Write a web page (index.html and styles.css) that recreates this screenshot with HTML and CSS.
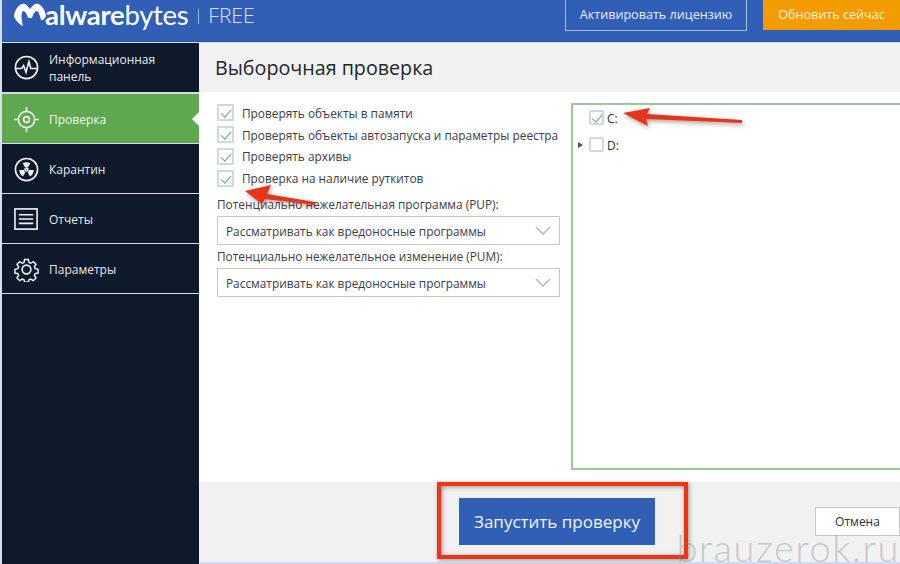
FILE: index.html
```html
<!DOCTYPE html>
<html lang="ru">
<head>
  <meta charset="utf-8">
  <title>Malwarebytes FREE</title>
  <link rel="stylesheet" href="styles.css">
</head>
<body>
<div class="app">
  <header class="topbar">
    <div class="logo">
      <svg class="logo-mark" viewBox="0 0 32 24" width="32" height="24">
        <path fill="#fff" d="M0 13C1 7 4 2 8 1c3-1 5 1 8 5 3-4 5-6 8-5 4 1 7 6 8 12-1 2-3 5-5 4-1-4-2-8-4-9-2 0-4 3-5 7h-4C13 11 11 8 9 8c-2 1-2 8 0 15C5 21 1 17 0 13z"/>
      </svg>
      <span class="logo-text"><b>alware</b>bytes</span>
      <span class="logo-sep"></span>
      <span class="logo-free">FREE</span>
    </div>
    <div class="top-actions">
      <a class="btn-activate">Активировать лицензию</a>
      <a class="btn-upgrade">Обновить сейчас</a>
    </div>
  </header>

  <div class="body-row">
    <nav class="sidebar">
      <div class="nav-item nav-tall">
        <svg class="nav-icon" viewBox="0 0 26 26"><circle cx="13" cy="13" r="11.5"/><path d="M2 14h6l2-3 2.500 7 3-11 2 7h6.500"/></svg>
        <span>Информационная панель</span>
      </div>
      <div class="nav-item nav-active">
        <svg class="nav-icon" viewBox="0 0 26 26"><circle cx="13" cy="13" r="8.500"/><circle cx="13" cy="13" r="3"/><path d="M13 0v4.500M13 21.500V26M0 13h4.500M21.500 13H26"/></svg>
        <span>Проверка</span>
      </div>
      <div class="nav-item">
        <svg class="nav-icon" viewBox="0 0 26 26"><circle cx="13" cy="13" r="11.500"/><circle cx="13" cy="13" r="1.500"/><path class="filled" d="M9 6.500c2.500-1.400 5.500-1.400 8 0l-2.500 4.200c-1-.5-2-.5-3 0zM5.500 13.500h5c0 1 .5 1.900 1.300 2.400l-2.500 4.300c-2.300-1.400-3.800-3.900-3.800-6.700zM20.500 13.500h-5c0 1-.5 1.900-1.300 2.400l2.500 4.300c2.300-1.400 3.800-3.900 3.800-6.700z"/></svg>
        <span>Карантин</span>
      </div>
      <div class="nav-item">
        <svg class="nav-icon" viewBox="0 0 26 26"><rect x="1" y="2" width="23" height="21"/><path d="M5 8h15M5 12.500h15M5 17h15"/></svg>
        <span>Отчеты</span>
      </div>
      <div class="nav-item">
        <svg class="nav-icon" viewBox="0 0 26 26"><circle cx="13" cy="13" r="4.500"/><path d="M10.800 1.500h4.400l.7 3.400 2 .9 3-1.900 3.100 3.100-1.900 3 .9 2 3.400.7v4.400l-3.400.7-.9 2 1.900 3-3.100 3.100-3-1.900-2 .9-.7 2.600h-4.400l-.7-2.600-2-.9-3 1.900-3.100-3.100 1.900-3-.9-2-3.400-.7v-4.400l3.400-.7.9-2-1.900-3 3.100-3.100 3 1.900 2-.9z" transform="translate(1.300 1.300) scale(.9)"/></svg>
        <span>Параметры</span>
      </div>
    </nav>

    <main class="main">
      <div class="title-bar">Выборочная проверка</div>

      <div class="content">
        <section class="options">
          <div class="check-list">
            <label class="check-row"><span class="box on"></span>Проверять объекты в памяти</label>
            <label class="check-row"><span class="box on"></span>Проверять объекты автозапуска и параметры реестра</label>
            <label class="check-row"><span class="box on"></span>Проверять архивы</label>
            <label class="check-row"><span class="box on"></span>Проверка на наличие руткитов</label>
          </div>
          <div class="field-label first">Потенциально нежелательная программа (PUP):</div>
          <div class="select">Рассматривать как вредоносные программы<svg class="chevron" viewBox="0 0 16 9"><path d="M1 1l7 7 7-7"/></svg></div>
          <div class="field-label">Потенциально нежелательное изменение (PUM):</div>
          <div class="select">Рассматривать как вредоносные программы<svg class="chevron" viewBox="0 0 16 9"><path d="M1 1l7 7 7-7"/></svg></div>
        </section>

        <section class="tree">
          <div class="tree-row"><span class="tree-arrow"></span><span class="box small on"></span><span class="tree-label">C:</span></div>
          <div class="tree-row"><span class="tree-arrow shown"></span><span class="box small"></span><span class="tree-label">D:</span></div>
        </section>
      </div>

      <footer class="footer">
        <a class="btn-start">Запустить проверку</a>
        <a class="btn-cancel">Отмена</a>
      </footer>
    </main>
  </div>

  <!-- пометки поверх скриншота -->
  <svg class="marks" viewBox="0 0 900 564" width="900" height="564">
    <path class="arrow" d="M245 191l26-6-4 9 48 8v3l-50-6-3 5z"/>
    <path class="arrow" d="M623 113l27-5-3 6 95 6v3l-96-4 2 7z"/>
    <rect class="mark-box" x="439" y="484" width="247" height="73"/>
  </svg>
  <div class="watermark">brauzerok.ru</div>
</div>
</body>
</html>
```

FILE: styles.css
```css
* {
  box-sizing: border-box;
}

body {
  margin: 0;
  background: #fff;
  font-family: "Open Sans", "Noto Sans", sans-serif;
  color: #3a4048;
}

.app {
  position: relative;
  width: 900px;
  height: 564px;
  overflow: hidden;
  display: flex;
  flex-direction: column;
  padding-left: 2px;
  background: #d5e2f3;
}

/* top bar */
.topbar {
  height: 42px;
  flex: none;
  display: flex;
  justify-content: space-between;
  background: #305fb5;
  border-bottom: 1px solid #2a549f;
}

.logo {
  display: flex;
  align-items: flex-start;
  padding-left: 12px;
  color: #fff;
}

.logo-mark {
  margin-top: 3px;
  flex: none;
}

.logo-text {
  font-family: "Lato", sans-serif;
  font-size: 27.500px;
  line-height: 36px;
  letter-spacing: -0.3px;
  margin: -3px 0 0 -1px;
  font-weight: 400;
}

.logo-text b {
  font-weight: 700;
}

.logo-sep {
  width: 1px;
  height: 15px;
  margin: 9px 9px 0 10px;
  background: #9db6e0;
}

.logo-free {
  font-size: 21px;
  line-height: 30px;
  font-weight: 300;
  color: #d8e2f4;
}

.top-actions {
  display: flex;
  gap: 16px;
  font-size: 12.600px;
  color: #e6edf8;
}

.btn-activate {
  width: 182px;
  height: 31px;
  border: 1px solid #a9bfe2;
  border-top: 0;
  text-align: center;
  line-height: 30px;
}

.btn-upgrade {
  width: 137px;
  height: 30px;
  background: #f39c00;
  color: #fdf0d8;
  text-align: center;
  line-height: 30px;
}

.body-row {
  flex: 1;
  display: flex;
  min-height: 0;
  padding-top: 1px;
}

/* sidebar */
.sidebar {
  width: 197px;
  flex: none;
  display: flex;
  flex-direction: column;
  background: #0e1a2c;
}

.nav-item {
  position: relative;
  height: 50px;
  display: flex;
  align-items: center;
  gap: 10px;
  padding: 1px 0 0 12px;
  background: #0e1a2c;
  border-bottom: 1px solid #d9dcdf;
  color: #e6e8ea;
  font-size: 12px;
  line-height: 17px;
}

.nav-tall {
  height: 51px;
  padding-top: 0;
  border-bottom-width: 2px;
}

.nav-tall span {
  width: 125px;
}

.nav-active {
  background: #5ea94f;
  color: #f2f8f0;
}

.nav-active::after {
  content: "";
  position: absolute;
  right: 0;
  top: 18px;
  border-style: solid;
  border-width: 7px 7px 7px 0;
  border-color: transparent #fff transparent transparent;
}

.nav-icon {
  width: 25px;
  height: 25px;
  flex: none;
  fill: none;
  stroke: #eef0f2;
  stroke-width: 1.700;
}

.nav-icon .filled {
  fill: #eef0f2;
  stroke: none;
}

/* main area */
.main {
  flex: 1;
  display: flex;
  flex-direction: column;
  min-width: 0;
  background: #fff;
}

.title-bar {
  height: 49px;
  flex: none;
  padding-left: 16px;
  background: #f1f1f1;
  font-size: 19.700px;
  line-height: 49px;
  color: #20262e;
}

.content {
  height: 390px;
  flex: none;
  display: flex;
  padding: 12px 0 12px 18px;
}

.options {
  width: 342px;
  flex: none;
  font-size: 11.850px;
}

.check-list {
  display: flex;
  flex-direction: column;
  gap: 4.300px;
}

.check-row {
  display: flex;
  align-items: center;
  height: 17.500px;
  gap: 8px;
  white-space: nowrap;
}

.box {
  position: relative;
  width: 17px;
  height: 17px;
  flex: none;
  background: #fff;
  border: 2px solid #d5d8da;
}

.box.on::after {
  content: "";
  position: absolute;
  left: 4px;
  top: 1px;
  width: 5px;
  height: 9px;
  border: solid #5eb56e;
  border-width: 0 1.500px 1.500px 0;
  transform: rotate(42deg);
}

.box.small {
  width: 15px;
  height: 15px;
  border-radius: 2px;
}

.box.small.on::after {
  left: 3px;
  top: 0;
}

.field-label {
  height: 13px;
  margin: 5px 0;
  line-height: 13px;
  white-space: nowrap;
}

.field-label.first {
  margin-top: 11px;
}

.select {
  display: flex;
  align-items: center;
  justify-content: space-between;
  width: 343px;
  height: 29px;
  padding: 1px 8px 0 8px;
  background: #fff;
  border: 1px solid #c6c8ca;
  white-space: nowrap;
}

.chevron {
  width: 16px;
  height: 9px;
  fill: none;
  stroke: #b5b8bb;
  stroke-width: 1.500;
}

.tree {
  flex: 1;
  margin: -1px 0 0 12px;
  border: 2px solid #9dc79d;
  border-right: 0;
  padding-top: 5px;
  font-size: 12px;
  color: #2a3038;
}

.tree-row {
  display: flex;
  align-items: center;
  height: 15px;
  margin-bottom: 12px;
  padding-left: 5px;
}

.tree-arrow {
  width: 11px;
  flex: none;
}

.tree-arrow.shown {
  width: 0;
  height: 0;
  margin-right: 6px;
  border-style: solid;
  border-width: 3px 0 3px 5px;
  border-color: transparent transparent transparent #555;
}

.tree-row .box {
  margin-right: 3px;
}

.tree-label {
  padding-top: 2px;
}

/* bottom buttons */
.footer {
  flex: 1;
  display: flex;
  align-items: flex-start;
  padding-left: 260px;
  background: #f1f1f1;
  border-bottom: 2px solid #cfdcf0;
}

.btn-start {
  width: 197px;
  height: 47px;
  margin-top: 16px;
  background: #305fb5;
  color: #f0f4fb;
  font-size: 17px;
  line-height: 47px;
  text-align: center;
}

.btn-cancel {
  width: 85px;
  height: 29px;
  margin: 25px 0 0 160px;
  flex: none;
  background: #fff;
  border: 1px solid #c6c8ca;
  color: #2a3038;
  font-size: 12px;
  line-height: 27px;
  text-align: center;
}

/* overlays */
.marks {
  position: absolute;
  left: 0;
  top: 0;
  pointer-events: none;
}

.arrow {
  fill: #e8341a;
  filter: drop-shadow(1px 2px 2px rgba(60, 40, 30, 0.45));
}

.mark-box {
  fill: none;
  stroke: #ee3414;
  stroke-width: 4;
  filter: drop-shadow(1px 1px 2px rgba(60, 60, 40, 0.55));
}

.watermark {
  position: absolute;
  right: 0;
  top: 530px;
  font-family: "Lato", sans-serif;
  font-size: 38px;
  line-height: 34px;
  font-weight: 300;
  letter-spacing: 1.600px;
  color: rgba(120, 120, 120, 0.36);
  white-space: nowrap;
}
```
